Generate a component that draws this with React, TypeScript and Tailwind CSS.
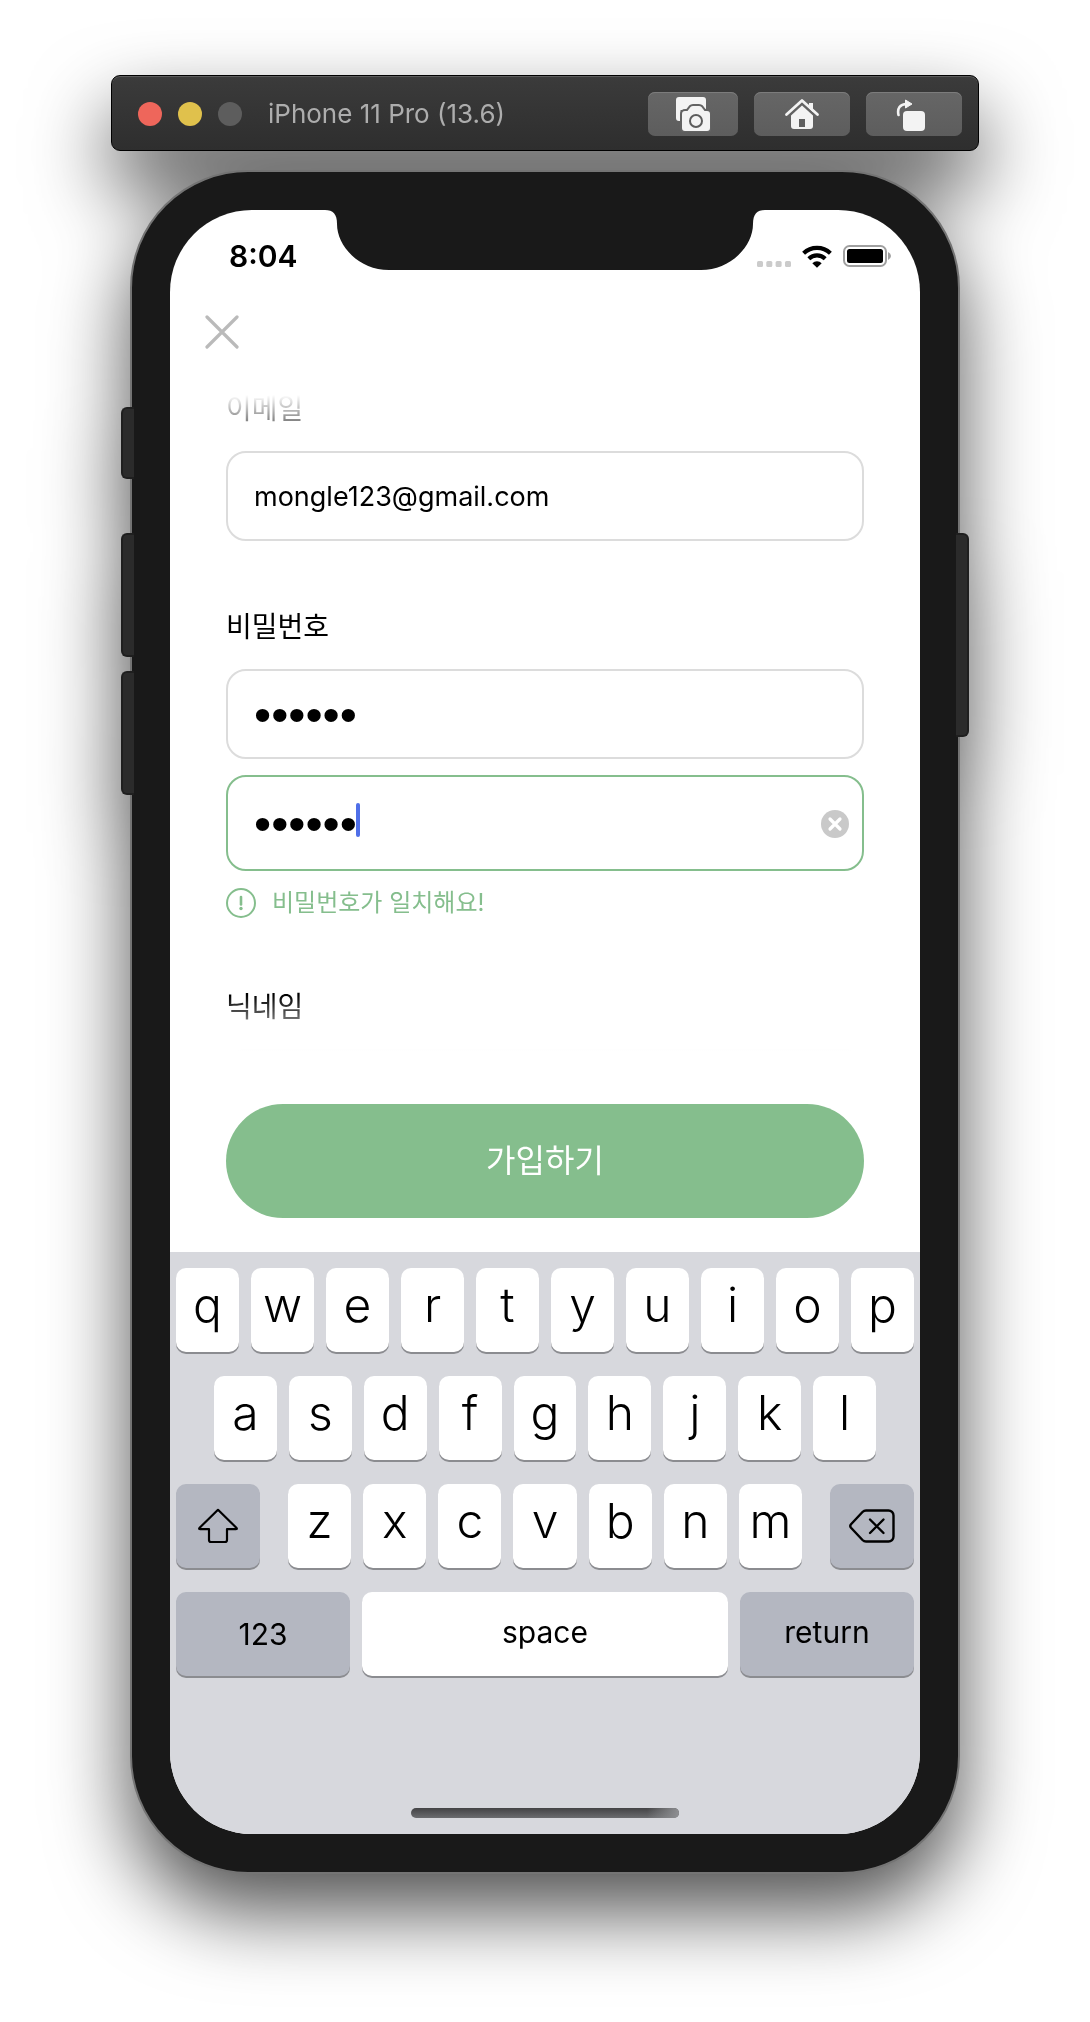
import type { ReactNode } from "react";

const FONT = "font-['Inter','Noto_Sans_CJK_KR',sans-serif]";

function TitleBar() {
  return (
    <header className="mx-auto flex h-[76px] w-full max-w-[868px] items-center rounded-[9px] border border-black bg-linear-to-b from-[#3b3b3b] to-[#2e2e2e] pt-0.5 pr-4 pl-[26px] shadow-[inset_0_1px_0_#5c5c5c]">
      <div className="flex gap-4">
        <button type="button" aria-label="Close window" className="size-6 rounded-full bg-[#ee665b]" />
        <button type="button" aria-label="Minimize window" className="size-6 rounded-full bg-[#e0c14c]" />
        <button type="button" aria-label="Zoom window" disabled className="size-6 rounded-full bg-[#5d5d5d]" />
      </div>
      <h1 className="ml-[26px] flex-1 truncate text-[26px] leading-8 text-[#adadad]">iPhone 11 Pro (13.6)</h1>
      <div className="flex gap-4">
        <ToolButton label="Screenshot" width="w-[90px]">
          <path d="M4 1h24a3 3 0 0 1 3 3v10H5.500v11H4a3 3 0 0 1-3-3V4a3 3 0 0 1 3-3z" />
          <path
            d="M10 15h2.500l3-4q1-1 2.500-1h6q1.500 0 2.500 1l3 4H32a3 3 0 0 1 3 3v14a3 3 0 0 1-3 3H10a3 3 0 0 1-3-3V18a3 3 0 0 1 3-3z"
            stroke="#636363"
            strokeWidth="4"
            paintOrder="stroke"
          />
          <circle cx="21" cy="25" r="6" stroke="#5c5c5c" strokeWidth="2" />
        </ToolButton>
        <ToolButton label="Home" width="w-24">
          <path d="M25 7h4v9l-4-4z" />
          <path d="M2.500 18.500 18 4.500l15.500 14" fill="none" stroke="#f3f3f3" strokeWidth="2.800" strokeLinecap="round" strokeLinejoin="round" />
          <path d="M18 9.500 29 19.500V30a3 3 0 0 1-3 3H10a3 3 0 0 1-3-3V19.500z" />
          <path d="M15 23h6v8h-6z" fill="#606060" />
        </ToolButton>
        <ToolButton label="Rotate" width="w-24">
          <rect x="7" y="15" width="22" height="20" rx="4" />
          <path d="M2.500 19C1 12.500 4 8 10.500 8" fill="none" stroke="#f3f3f3" strokeWidth="2.600" strokeLinecap="round" />
          <path d="M9.500 4v8L16 8z" stroke="#f3f3f3" strokeLinejoin="round" />
        </ToolButton>
      </div>
    </header>
  );
}

function ToolButton({ label, width, children }: { label: string; width: string; children: ReactNode }) {
  return (
    <button
      type="button"
      aria-label={label}
      className={`${width} flex h-11 items-center justify-center rounded-[7px] bg-linear-to-b from-[#666666] to-[#5d5d5d] shadow-[inset_0_1px_0_#7c7c7c]`}
    >
      <svg width="36" height="36" viewBox="0 0 36 36" fill="#f3f3f3" aria-hidden="true">
        {children}
      </svg>
    </button>
  );
}

function StatusBar() {
  return (
    <div className="flex h-[92px] items-center justify-between pr-[29px] pl-[59px]">
      <time className="text-[30px] leading-9 font-semibold">8:04</time>
      <div className="flex items-center gap-[11px]">
        <svg width="34" height="22" viewBox="0 0 34 22" fill="#cbcbcb" aria-hidden="true">
          <rect x="0" y="16" width="6" height="6" rx="1.500" />
          <rect x="9.300" y="16" width="6" height="6" rx="1.500" />
          <rect x="18.600" y="16" width="6" height="6" rx="1.500" />
          <rect x="28" y="16" width="6" height="6" rx="1.500" />
        </svg>
        <svg width="30" height="23" viewBox="0 0 30 23" aria-hidden="true">
          <g fill="none" stroke="#000" strokeWidth="4.200">
            <path d="M1.600 8.300a19.500 19.500 0 0 1 26.800 0" />
            <path d="M6.800 13.700a12 12 0 0 1 16.400 0" />
          </g>
          <path d="M15 22.800l-4.700-4.600a6.800 6.800 0 0 1 9.400 0z" />
        </svg>
        <svg width="48" height="22" viewBox="0 0 48 22" aria-hidden="true">
          <rect x="1" y="1" width="42" height="20" rx="5.500" fill="none" stroke="#a0a0a0" strokeWidth="2" />
          <rect x="4" y="4" width="36" height="14" rx="2.500" />
          <path d="M45 7q3 1.500 3 4t-3 4z" fill="#a0a0a0" />
        </svg>
      </div>
    </div>
  );
}

const labelClass = "block h-10 text-[28px] leading-10 text-black mb-[22px]";
const fieldClass = "block w-full rounded-[20px] border-2 bg-white px-[26px] text-black outline-none";
const passwordClass = "font-['Liberation_Sans',sans-serif] text-[49px]";

function SignUpForm() {
  return (
    <form className="px-14" onSubmit={(e) => e.preventDefault()}>
      <div className="relative overflow-hidden">
        <label htmlFor="email" className={labelClass}>
          이메일
        </label>
        <input
          id="email"
          type="email"
          defaultValue="mongle123@gmail.com"
          className={`${fieldClass} h-[90px] border-[#dcdcdc] text-[27px]`}
        />

        <label htmlFor="password" className={`${labelClass} mt-[66px]`}>
          비밀번호
        </label>
        <input
          id="password"
          type="password"
          defaultValue="mongle"
          className={`${fieldClass} ${passwordClass} h-[90px] border-[#dcdcdc]`}
        />

        <div className="relative mt-4">
          <input
            type="password"
            aria-label="비밀번호 확인"
            defaultValue="mongle"
            className={`${fieldClass} ${passwordClass} h-24 border-[#85be8d]`}
          />
          <span className="absolute top-7 left-[130px] h-[34px] w-1 rounded-full bg-[#4f6fe8]" />
          <button type="button" aria-label="지우기" className="absolute top-[35px] right-[15px] size-7">
            <svg viewBox="0 0 28 28" aria-hidden="true">
              <circle cx="14" cy="14" r="14" fill="#c9c9c9" />
              <path d="M9 9l10 10M19 9L9 19" stroke="#fff" strokeWidth="3.200" strokeLinecap="round" />
            </svg>
          </button>
        </div>
        <p className="mt-4 flex h-8 items-center gap-4 text-2xl text-[#85be8d]">
          <svg width="30" height="30" viewBox="0 0 30 30" aria-hidden="true">
            <circle cx="15" cy="15" r="14" fill="none" stroke="currentColor" strokeWidth="2" />
            <path d="M15 9v7.500" stroke="currentColor" strokeWidth="2.600" strokeLinecap="round" />
            <circle cx="15" cy="20.500" r="1.700" fill="currentColor" />
          </svg>
          비밀번호가 일치해요!
        </p>

        <label htmlFor="nickname" className={`${labelClass} mt-[68px]`}>
          닉네임
        </label>
        <input id="nickname" type="text" className={`${fieldClass} -mb-[74px] h-[90px] border-[#dcdcdc] text-[27px]`} />

        <div className="pointer-events-none absolute inset-x-0 top-0 h-[60px] bg-linear-to-b from-white from-10% to-white/0" />
        <div className="pointer-events-none absolute inset-x-0 bottom-0 h-[70px] bg-linear-to-t from-white from-20% to-white/0" />
      </div>
      <button type="submit" className="mt-[39px] mb-[34px] h-[114px] w-full rounded-full bg-[#85be8d] text-[32px] text-white">
        가입하기
      </button>
    </form>
  );
}

const keyBase = "flex h-[84px] items-center justify-center rounded-[10px] text-black shadow-[0_2px_0_#8b8c90]";
const letterKey = `${keyBase} min-w-0 flex-1 bg-white pb-2.5 text-5xl font-[350]`;
const greyKey = `${keyBase} bg-[#b4b7c1]`;

function Letters({ keys }: { keys: string }) {
  return (
    <>
      {keys.split("").map((k) => (
        <button key={k} type="button" className={letterKey}>
          {k}
        </button>
      ))}
    </>
  );
}

function Keyboard() {
  return (
    <div className="bg-[#d7d8dd] px-1.5 pt-4 pb-4">
      <div className="flex flex-col gap-6">
        <div className="flex gap-3">
          <Letters keys="qwertyuiop" />
        </div>
        <div className="flex gap-3 px-[38px]">
          <Letters keys="asdfghjkl" />
        </div>
        <div className="flex gap-7">
          <button type="button" aria-label="shift" className={`${greyKey} w-[84px]`}>
            <svg width="40" height="36" viewBox="0 0 40 36" fill="none" stroke="#000" strokeWidth="2.200" strokeLinejoin="round" aria-hidden="true">
              <path d="M20 1.800 38.600 20q.800 1.200-.800 1.200H29V32a2 2 0 0 1-2 2H13a2 2 0 0 1-2-2V21.200H2.200Q.600 21.200 1.400 20z" />
            </svg>
          </button>
          <div className="flex flex-1 gap-3">
            <Letters keys="zxcvbnm" />
          </div>
          <button type="button" aria-label="delete" className={`${greyKey} w-[84px]`}>
            <svg width="46" height="34" viewBox="0 0 46 34" fill="none" stroke="#000" strokeWidth="2.400" strokeLinecap="round" strokeLinejoin="round" aria-hidden="true">
              <path d="M17 1.500h22.500a5 5 0 0 1 5 5v21a5 5 0 0 1-5 5H17q-2 0-3.500-1.500L2 18.800q-1.500-1.800 0-3.600L13.500 3Q15 1.500 17 1.500z" />
              <path d="M21 10.500 34.500 24M34.500 10.500 21 24" />
            </svg>
          </button>
        </div>
        <div className="flex gap-3">
          <button type="button" className={`${greyKey} w-[174px] text-[30px]`}>
            123
          </button>
          <button type="button" className={`${keyBase} flex-1 bg-white pb-1 text-[30px]`}>
            space
          </button>
          <button type="button" className={`${greyKey} w-[174px] pb-1 text-[30px]`}>
            return
          </button>
        </div>
      </div>
      <div className="mx-auto mt-[132px] h-2.5 w-[268px] overflow-hidden rounded-full bg-linear-to-b from-[#434345] to-[#6b6c6f]">
        <div className="ml-auto h-full w-8 bg-linear-to-r from-transparent to-[#8e8f92]" />
      </div>
    </div>
  );
}

function Notch() {
  return (
    <svg className="absolute top-0 left-1/2 -translate-x-1/2" width="440" height="60" viewBox="0 0 440 60" fill="#191919" aria-hidden="true">
      <path d="M0-1V0C8 0 12 4 12 14 12 36 34 60 64 60H376C406 60 428 36 428 14 428 4 432 0 440 0V-1z" />
    </svg>
  );
}

const sideButton = "absolute w-[13px] border-2 border-[#1f1f1f] bg-[#2b2b2b]";

export default function App() {
  return (
    <main className={`${FONT} min-h-screen overflow-hidden bg-white pt-[75px] pb-[148px]`}>
      <div className="drop-shadow-[0_38px_40px_rgba(0,0,0,0.68)]">
        <TitleBar />
        <div className="relative mx-auto mt-[19px] w-full max-w-[830px] rounded-[118px] border-2 border-[#747474] bg-[#191919] p-[38px]">
          <span className={`${sideButton} top-[235px] -left-[11px] h-[72px] rounded-l-md border-r-0`} />
          <span className={`${sideButton} top-[361px] -left-[11px] h-[124px] rounded-l-md border-r-0`} />
          <span className={`${sideButton} top-[499px] -left-[11px] h-[124px] rounded-l-md border-r-0`} />
          <span className={`${sideButton} top-[361px] -right-[11px] h-[204px] rounded-r-md border-l-0`} />
          <div className="relative overflow-hidden rounded-[82px] bg-white">
            <StatusBar />
            <Notch />
            <div className="flex h-[87px] items-start pl-[22px]">
              <button type="button" aria-label="닫기" className="flex size-[60px] items-center justify-center">
                <svg width="34" height="34" viewBox="0 0 34 34" stroke="#bababa" strokeWidth="3.200" strokeLinecap="round" aria-hidden="true">
                  <path d="M2 2l30 30M32 2L2 32" />
                </svg>
              </button>
            </div>
            <SignUpForm />
            <Keyboard />
          </div>
        </div>
      </div>
    </main>
  );
}
